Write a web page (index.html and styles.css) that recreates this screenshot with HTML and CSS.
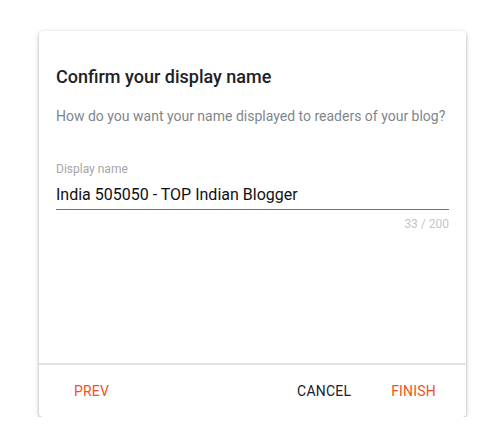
FILE: index.html
```html
<!DOCTYPE html>
<html>
<head>
<meta charset="utf-8">
<link rel="stylesheet" href="styles.css">
</head>
<body>
<div class="dialog">
  <div class="content">
    <h2 class="title">Confirm your display name</h2>
    <p class="subtitle">How do you want your name displayed to readers of your blog?</p>
    <div class="field">
      <label class="label">Display name</label>
      <div class="input">India 505050 - TOP Indian Blogger</div>
      <div class="counter">33 / 200</div>
    </div>
  </div>
  <div class="footer">
    <button class="btn accent">PREV</button>
    <div class="spacer"></div>
    <button class="btn">CANCEL</button>
    <button class="btn accent">FINISH</button>
  </div>
</div>
</body>
</html>
```
FILE: styles.css
```css
html, body {
  margin: 0;
  padding: 0;
  background: #ffffff;
}
body {
  font-family: Roboto, "Liberation Sans", Arial, sans-serif;
  padding: 31px 0 0 39px;
}
.dialog {
  width: 427px;
  height: 386px;
  background: #fff;
  border-radius: 4px;
  box-shadow: 0 1px 3px rgba(0,0,0,0.28), 0 2px 6px rgba(0,0,0,0.12);
  display: flex;
  flex-direction: column;
}
.content {
  flex: 1;
  padding: 0 17px;
  border-bottom: 2px solid #e2e2e2;
}
.title {
  margin: 35px 0 0;
  font-size: 18px;
  font-weight: 500;
  color: #202124;
  line-height: 22px;
}
.subtitle {
  margin: 18px 0 0;
  font-size: 14px;
  color: #80868b;
  line-height: 20px;
}
.field {
  margin-top: 36px;
}
.label {
  display: block;
  font-size: 12px;
  color: #a5a5ab;
  line-height: 14px;
}
.input {
  margin-top: 9px;
  font-size: 16px;
  color: #111;
  line-height: 20px;
  padding-bottom: 4px;
  border-bottom: 1px solid #e64a19;
}
.counter {
  text-align: right;
  font-size: 12px;
  color: #c6c6c6;
  margin-top: 7px;
  line-height: 14px;
}
.footer {
  height: 52px;
  display: flex;
  align-items: center;
  padding: 0 14px 0 19px;
  gap: 8px;
}
.spacer {
  flex: 1;
}
.btn {
  font-family: Roboto, "Liberation Sans", Arial, sans-serif;
  font-size: 14px;
  font-weight: 400;
  background: none;
  border: none;
  padding: 0 16px;
  height: 36px;
  color: #202124;
  letter-spacing: 0.2px;
}
.btn.accent {
  color: #f4511e;
}
```
